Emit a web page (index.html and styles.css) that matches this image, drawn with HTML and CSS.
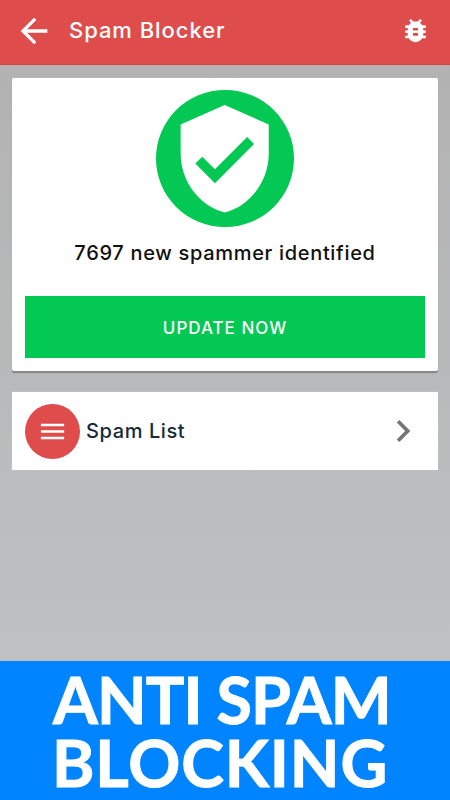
FILE: index.html
```html
<!DOCTYPE html>
<html lang="en">
<head>
<meta charset="utf-8">
<title>Spam Blocker</title>
<link rel="stylesheet" href="styles.css">
</head>
<body>
<header class="bar">
  <svg class="back" viewBox="0 0 24 24"><path d="M20 11H7.83l5.59-5.59L12 4l-8 8 8 8 1.41-1.41L7.83 13H20v-2z"/></svg>
  <h1 class="title">Spam Blocker</h1>
  <svg class="bug" viewBox="0 0 24 24"><path d="M20 8h-2.81c-.45-.78-1.07-1.45-1.82-1.96L17 4.41 15.59 3l-2.17 2.17C12.96 5.06 12.49 5 12 5c-.49 0-.96.06-1.41.17L8.41 3 7 4.41l1.62 1.63C7.88 6.55 7.26 7.22 6.81 8H4v2h2.09c-.05.33-.09.66-.09 1v1H4v2h2v1c0 .34.04.67.09 1H4v2h2.81c1.04 1.79 2.97 3 5.19 3s4.15-1.21 5.19-3H20v-2h-2.09c.05-.33.09-.66.09-1v-1h2v-2h-2v-1c0-.34-.04-.67-.09-1H20V8zm-6 8h-4v-2h4v2zm0-4h-4v-2h4v2z"/></svg>
</header>
<main class="content">
  <section class="card">
    <div class="badge">
      <svg class="shield" viewBox="0 0 24 24"><path d="M12 1L3 5v6c0 5.55 3.84 10.74 9 12 5.16-1.26 9-6.45 9-12V5l-9-4zm-2 16l-4-4 1.41-1.41L10 14.17l6.59-6.59L18 9l-8 8z"/></svg>
    </div>
    <p class="status">7697 new spammer identified</p>
    <button class="update"><span class="update-label">UPDATE NOW</span></button>
  </section>
  <section class="row">
    <div class="dot">
      <svg class="menu" viewBox="0 0 24 24"><path d="M3 18h18v-2H3v2zm0-5h18v-2H3v2zm0-7v2h18V6H3z"/></svg>
    </div>
    <span class="row-label">Spam List</span>
    <svg class="chevron" viewBox="0 0 24 24"><path d="M10 6L8.59 7.41 13.17 12l-4.58 4.59L10 18l6-6z"/></svg>
  </section>
</main>
<footer class="banner">
  <div class="line line-top">ANTI SPAM</div>
  <div class="line line-bottom">BLOCKING</div>
</footer>
</body>
</html>
```
FILE: styles.css
```css
* { box-sizing: border-box; }
body {
  margin: 0;
  width: 450px;
  height: 800px;
  overflow: hidden;
  display: flex;
  flex-direction: column;
  font-family: Inter, "Liberation Sans", sans-serif;
  font-weight: 500;
}
svg { display: block; flex: none; fill: #fff; }
.bar {
  height: 65px;
  flex: none;
  display: flex;
  align-items: center;
  padding: 0 19px 3px 14px;
  background: #de4c4c;
  border-bottom: 1px solid #da4141;
}
.back { width: 40px; height: 40px; }
.title {
  margin: 0 auto 1px 15px;
  font-size: 22px;
  line-height: 28px;
  font-weight: 500;
  color: #fff;
  letter-spacing: 0.95px;
  white-space: nowrap;
}
.bug { width: 31px; height: 31px; }
.content {
  flex: 1;
  display: flex;
  flex-direction: column;
  gap: 21px;
  padding: 12.5px 12.5px 0 12px;
  background: linear-gradient(#b2b2b2, #b8b9bb 50%, #bfc0c2);
}
.card {
  height: 293.5px;
  display: flex;
  flex-direction: column;
  align-items: center;
  padding: 12.5px 12.5px 0 13px;
  background: #fff;
  border-radius: 2px;
  box-shadow: 0 1.5px 1px #858587, 0 0 1px #d4d4d4;
}
.badge {
  width: 137.5px;
  height: 137px;
  border-radius: 50%;
  background: #03c853;
  display: flex;
  align-items: center;
  justify-content: center;
}
.shield { width: 117.4px; height: 117.4px; }
.status {
  margin: 12px 0 29px;
  font-size: 20px;
  line-height: 28px;
  color: #111;
  letter-spacing: 0.68px;
  white-space: nowrap;
}
.update {
  width: 400px;
  height: 62px;
  padding: 1px 0 0;
  border: 0;
  background: #03c853;
  color: #fff;
  font: 500 17px/24px Inter, "Liberation Sans", sans-serif;
}
.update-label { letter-spacing: 1px; }
.row {
  height: 78px;
  display: flex;
  align-items: center;
  padding: 0 13px;
  background: #fff;
  box-shadow: 0 0 1px #d4d4d4;
}
.dot {
  width: 55px;
  height: 55px;
  border-radius: 50%;
  background: #de4c4c;
  display: flex;
  align-items: center;
  justify-content: center;
}
.menu { width: 31px; height: 31px; }
.row-label {
  margin: 0 auto 0 6px;
  font-size: 20px;
  color: #142b38;
  letter-spacing: 0.6px;
}
.chevron { width: 44px; height: 44px; fill: #757575; }
.banner {
  height: 139px;
  flex: none;
  padding-top: 7px;
  background: #0084ff;
  color: #fff;
  font-family: Lato, "Liberation Sans", sans-serif;
  font-weight: 700;
  font-size: 64.5px;
  line-height: 62.5px;
  white-space: nowrap;
  -webkit-text-stroke: 1px #fff;
}
.line-top { padding-left: 53px; letter-spacing: -0.9px; }
.line-bottom { padding-left: 52px; letter-spacing: 0.9px; }
```
